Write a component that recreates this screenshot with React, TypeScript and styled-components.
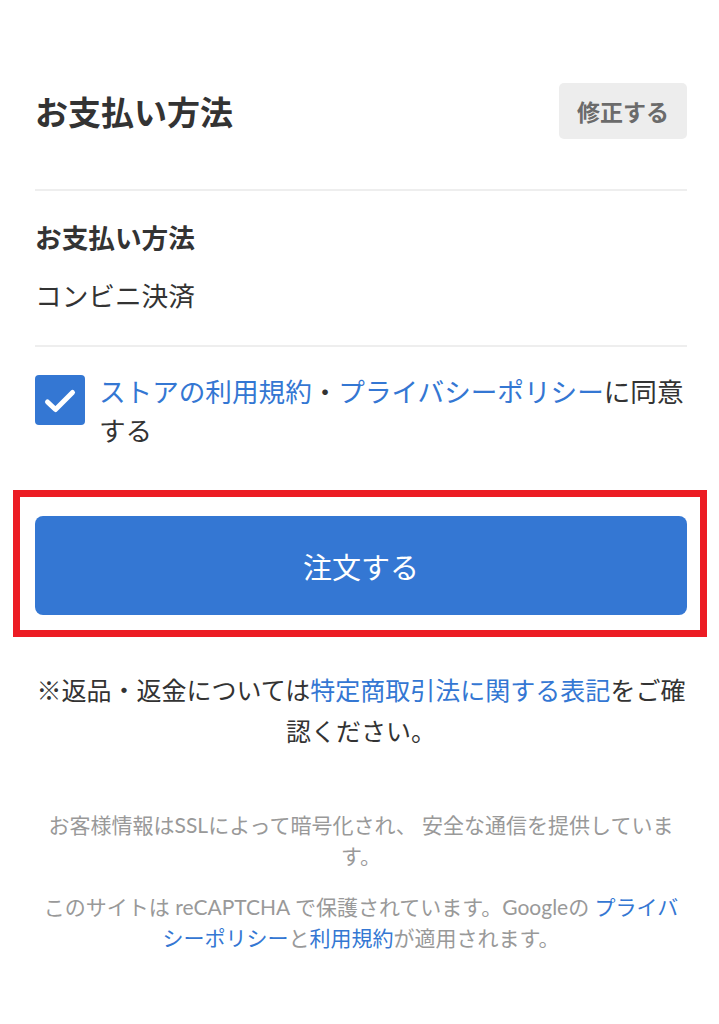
import React from 'react';
import styled, { createGlobalStyle } from 'styled-components';

const COLORS = {
  text: '#333333',
  muted: '#999999',
  blue: '#3477d3',
  line: '#eeeeee',
  red: '#ec1c24',
};

const GlobalStyle = createGlobalStyle`
  body {
    margin: 0;
    background: #fff;
    font-family: "Lato", "Noto Sans CJK JP", sans-serif;
    color: ${COLORS.text};
  }
`;

const Page = styled.div`
  padding: 83px 32px 60px 35px;
`;

const Header = styled.div`
  display: flex;
  align-items: center;
  justify-content: space-between;
  height: 56px;
  margin-bottom: 50px;
`;

const Title = styled.h2`
  margin: 0;
  padding-top: 3px;
  font-size: 33px;
  font-weight: 700;
  line-height: 1;
`;

const EditButton = styled.button`
  width: 128px;
  height: 56px;
  padding: 0;
  border: none;
  border-radius: 5px;
  background: #ededed;
  color: #6b6b6b;
  font-family: inherit;
  font-size: 23px;
  font-weight: 700;
  cursor: pointer;
`;

const Divider = styled.hr<{ $after: number }>`
  margin: 0 0 ${(p) => p.$after}px;
  border: none;
  height: 2px;
  background: ${COLORS.line};
`;

const Label = styled.h3`
  margin: 0 0 18px;
  font-size: 26.67px;
  font-weight: 700;
  line-height: 40px;
`;

const Value = styled.p`
  margin: 0 0 29px;
  font-size: 26.67px;
  line-height: 40px;
`;

const AgreeRow = styled.label`
  display: flex;
  gap: 14px;
  align-items: flex-start;
`;

const CheckBox = styled.span`
  flex: none;
  width: 50px;
  height: 50px;
  margin-top: 2px;
  border-radius: 4px;
  background: ${COLORS.blue};
  display: flex;
  align-items: center;
  justify-content: center;
`;

const AgreeText = styled.span`
  font-size: 26.6px;
  line-height: 39px;
`;

const Link = styled.a`
  color: ${COLORS.blue};
  text-decoration: none;
`;

const Highlight = styled.div`
  margin: 39px -20px 0 -22px;
  border: 7px solid ${COLORS.red};
  padding: 19px 13px 15px 15px;
`;

const OrderButton = styled.button`
  display: block;
  width: 100%;
  height: 99px;
  border: none;
  border-radius: 8px;
  background: ${COLORS.blue};
  color: #fff;
  font-family: inherit;
  font-size: 29px;
  font-weight: 400;
  cursor: pointer;
`;

const Notice = styled.p`
  margin: 33px 0 0;
  text-align: center;
  font-size: 25px;
  line-height: 41px;
`;

const Footer = styled.div`
  margin-top: 58px;
  display: flex;
  flex-direction: column;
  gap: 21px;
`;

const FooterText = styled.p`
  margin: 0;
  text-align: center;
  color: ${COLORS.muted};
  font-size: 21px;
  line-height: 30.5px;
`;

const Check = () => (
  <svg width="50" height="50" viewBox="0 0 50 50" fill="none">
    <polyline
      points="12.5,27 20.5,34.5 37.5,17.5"
      stroke="#fff"
      strokeWidth="5"
      strokeLinecap="round"
      strokeLinejoin="round"
    />
  </svg>
);

const App = () => (
  <>
    <GlobalStyle />
    <Page>
      <Header>
        <Title>お支払い方法</Title>
        <EditButton>修正する</EditButton>
      </Header>
      <Divider $after={27} />
      <Label>お支払い方法</Label>
      <Value>コンビニ決済</Value>
      <Divider $after={26} />
      <AgreeRow>
        <CheckBox>
          <Check />
        </CheckBox>
        <AgreeText>
          <Link href="#">ストアの利用規約</Link>・<Link href="#">プライバシーポリシー</Link>に同意する
        </AgreeText>
      </AgreeRow>
      <Highlight>
        <OrderButton>注文する</OrderButton>
      </Highlight>
      <Notice>
        ※返品・返金については<Link href="#">特定商取引法に関する表記</Link>をご確認ください。
      </Notice>
      <Footer>
        <FooterText>お客様情報はSSLによって暗号化され、 安全な通信を提供しています。</FooterText>
        <FooterText>
          このサイトは reCAPTCHA で保護されています。Googleの <Link href="#">プライバシーポリシー</Link>と
          <Link href="#">利用規約</Link>が適用されます。
        </FooterText>
      </Footer>
    </Page>
  </>
);

export default App;
